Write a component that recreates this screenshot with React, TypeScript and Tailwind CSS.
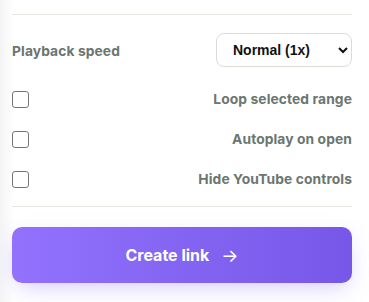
import { useState } from 'react';

const options = [
  { id: 'loop', label: 'Loop selected range' },
  { id: 'autoplay', label: 'Autoplay on open' },
  { id: 'hide', label: 'Hide YouTube controls' },
];

export default function App() {
  const [speed, setSpeed] = useState('1');
  const [checked, setChecked] = useState<Record<string, boolean>>({});

  return (
    <div className="min-h-[302px] w-full bg-white bg-[linear-gradient(to_right,#f4f4f5_0px,#ffffff_14px)] font-['Inter',sans-serif]">
      <div className="pl-3 pr-[17px] pt-[14px]">
        <div className="h-px bg-[#e9e7e1]" />

        <div className="mt-[18px] flex h-[34px] items-center justify-between">
          <label htmlFor="speed" className="pt-[2px] text-[13.8px] font-bold tracking-[0.1px] text-[#6b7670]">
            Playback speed
          </label>
          <select
            id="speed"
            value={speed}
            onChange={(e) => setSpeed(e.target.value)}
            className="h-[34px] w-[136px] rounded-lg border border-[#dcdcd6] bg-white pl-3 pr-1 font-['Liberation_Sans',Arial,sans-serif] text-[14px] font-bold text-[#111]"
          >
            <option value="0.5">Slow (0.5x)</option>
            <option value="1">Normal (1x)</option>
            <option value="1.5">Fast (1.5x)</option>
            <option value="2">Faster (2x)</option>
          </select>
        </div>

        <div className="mt-3 flex flex-col">
          {options.map((o) => (
            <label key={o.id} className="flex h-10 cursor-pointer items-center justify-between">
              <input
                type="checkbox"
                checked={!!checked[o.id]}
                onChange={(e) => setChecked({ ...checked, [o.id]: e.target.checked })}
                className="h-[17px] w-[17px] appearance-none rounded-[3px] border border-[#767676] bg-white checked:bg-[#7a5af0]"
              />
              <span className="pt-px text-[13.8px] font-bold tracking-[0.1px] text-[#6b7670]">{o.label}</span>
            </label>
          ))}
        </div>

        <div className="mt-[7px] h-px bg-[#e9e7e1]" />

        <button className="mt-5 flex h-14 w-full items-center justify-center gap-3 rounded-[10px] bg-gradient-to-r from-[#9272fd] to-[#7657e8] text-[16px] font-bold text-white shadow-[0_8px_24px_-6px_rgba(120,90,240,0.35)]">
          <span>Create link</span>
          <span className="text-[18px] font-normal">→</span>
        </button>
      </div>
    </div>
  );
}
